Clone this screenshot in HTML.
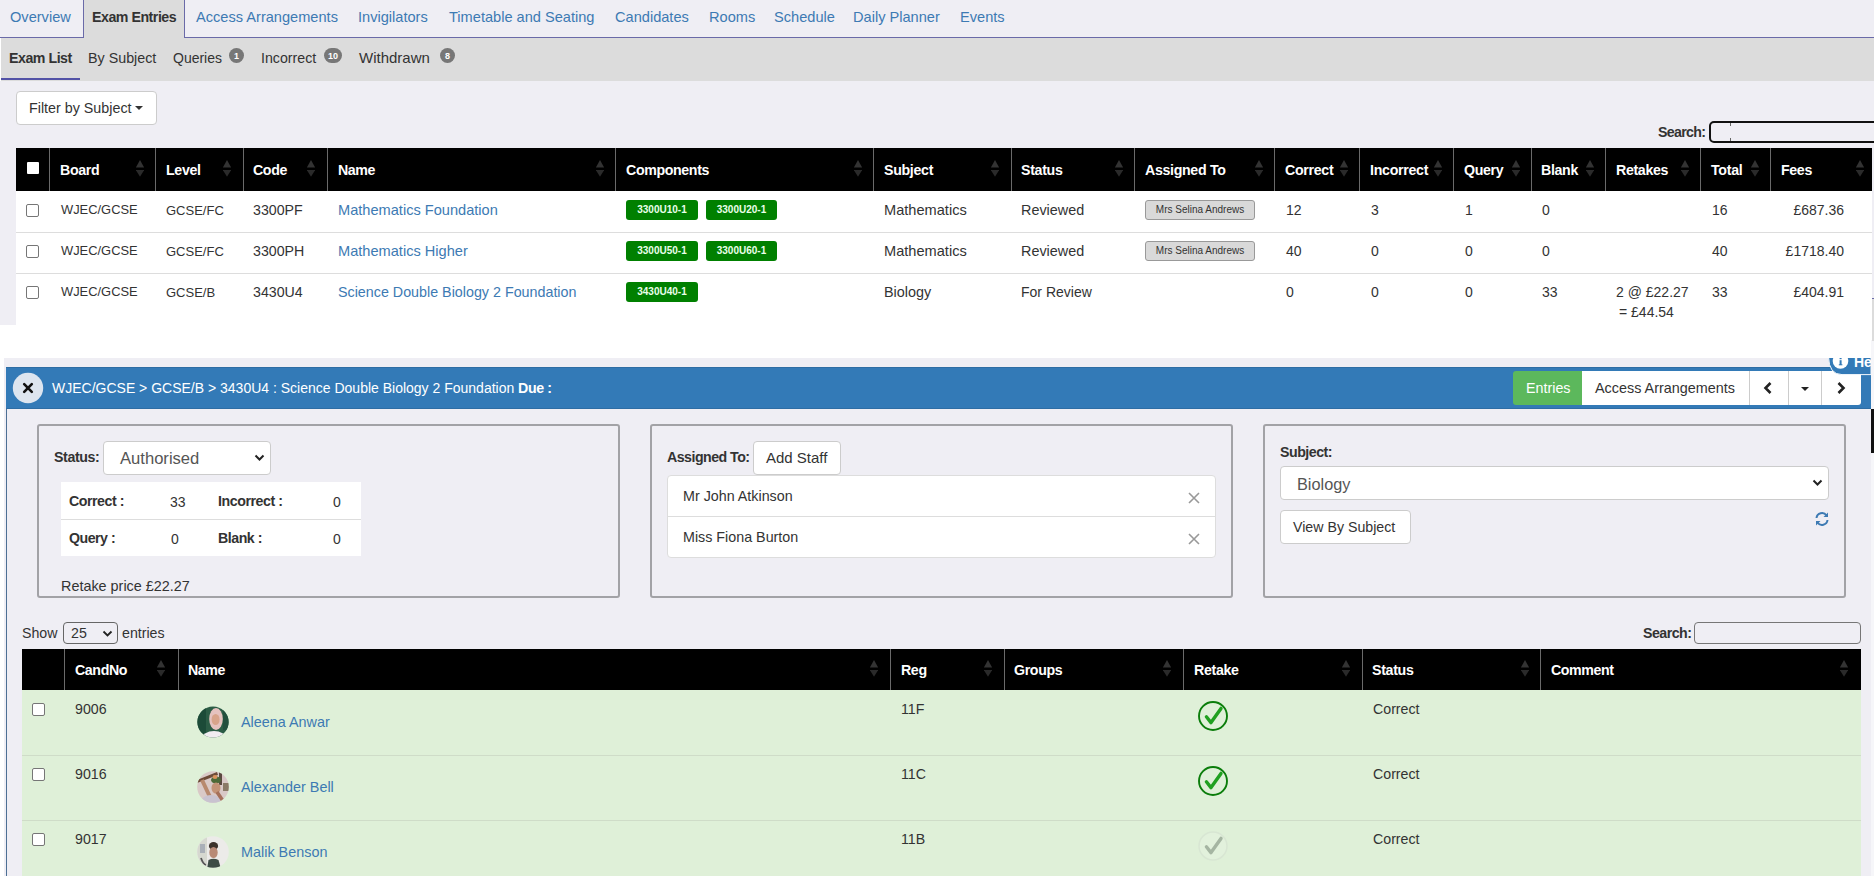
<!DOCTYPE html>
<html><head><meta charset="utf-8">
<style>
*{box-sizing:border-box;margin:0;padding:0}
html,body{width:1874px;height:876px;overflow:hidden;background:#fff}
body{font-family:"Liberation Sans",sans-serif;font-size:14px;color:#333;position:relative}
.abs{position:absolute}
.t{position:absolute;white-space:nowrap;line-height:1}
</style></head><body>

<div class="abs" style="left:0px;top:0px;width:1874px;height:38px;background:#efeef4"></div>
<div class="abs" style="left:0px;top:37px;width:1874px;height:1px;background:#6a6aa8"></div>
<div class="abs" style="left:83px;top:0px;width:102px;height:38px;background:#dcdcdc;border-left:1px solid #6a6aa8;border-right:1px solid #6a6aa8"></div>
<div class="t" style="left:10px;top:9.64px;font-size:14.6px;color:#3d7ab3;">Overview</div>
<div class="t" style="left:196px;top:9.64px;font-size:14.6px;color:#3d7ab3;">Access Arrangements</div>
<div class="t" style="left:358px;top:9.64px;font-size:14.6px;color:#3d7ab3;">Invigilators</div>
<div class="t" style="left:449px;top:9.64px;font-size:14.6px;color:#3d7ab3;">Timetable and Seating</div>
<div class="t" style="left:615px;top:9.64px;font-size:14.6px;color:#3d7ab3;">Candidates</div>
<div class="t" style="left:709px;top:9.64px;font-size:14.6px;color:#3d7ab3;">Rooms</div>
<div class="t" style="left:774px;top:9.64px;font-size:14.6px;color:#3d7ab3;">Schedule</div>
<div class="t" style="left:853px;top:9.64px;font-size:14.6px;color:#3d7ab3;">Daily Planner</div>
<div class="t" style="left:960px;top:9.64px;font-size:14.6px;color:#3d7ab3;">Events</div>
<div class="t" style="left:92px;top:9.98px;font-size:14.2px;color:#333;font-weight:bold;letter-spacing:-0.475px;">Exam Entries</div>
<div class="abs" style="left:1px;top:38px;width:1873px;height:43px;background:#dcdcdc"></div>
<div class="abs" style="left:1px;top:78px;width:79px;height:2px;background:#5252a6"></div>
<div class="t" style="left:9px;top:50.98px;font-size:14.2px;color:#333;font-weight:bold;letter-spacing:-0.472px;">Exam List</div>
<div class="t" style="left:88px;top:50.90px;font-size:14.3px;color:#333;">By Subject</div>
<div class="t" style="left:173px;top:51.15px;font-size:14.0px;color:#333;">Queries</div>
<div class="t" style="left:261px;top:50.98px;font-size:14.2px;color:#333;">Incorrect</div>
<div class="t" style="left:359px;top:50.30px;font-size:15.0px;color:#333;">Withdrawn</div>
<div class="abs" style="left:229px;top:48px;width:15px;height:15px;border-radius:8px;background:#777;color:#fff;font-size:9px;font-weight:bold;text-align:center;line-height:16px">1</div>
<div class="abs" style="left:324px;top:48px;width:18px;height:15px;border-radius:8px;background:#777;color:#fff;font-size:9px;font-weight:bold;text-align:center;line-height:16px">10</div>
<div class="abs" style="left:440px;top:48px;width:15px;height:15px;border-radius:8px;background:#777;color:#fff;font-size:9px;font-weight:bold;text-align:center;line-height:16px">8</div>
<div class="abs" style="left:0px;top:81px;width:1874px;height:244px;background:#efeef4"></div>
<div class="abs" style="left:16px;top:91px;width:141px;height:34px;background:#fff;border:1px solid #ccc;border-radius:4px"></div>
<div class="t" style="left:29px;top:100.90px;font-size:14.3px;color:#333;">Filter by Subject</div>
<svg class="abs" style="left:135px;top:106px" width="9" height="5"><path d="M0 0H8L4 4Z" fill="#333"/></svg>
<div class="t" style="left:1658px;top:124.98px;font-size:14.2px;color:#333;font-weight:bold;letter-spacing:-0.681px;">Search:</div>
<div class="abs" style="left:1709px;top:121px;width:170px;height:22px;background:#efeef4;border:2px solid #111;border-radius:5px"></div>
<div class="abs" style="left:1730px;top:123px;width:1px;height:3px;background:#666"></div>
<div class="abs" style="left:1730px;top:138px;width:1px;height:3px;background:#666"></div>
<div class="abs" style="left:16px;top:148px;width:1856px;height:43px;background:#000"></div>
<div class="abs" style="left:49px;top:148px;width:1px;height:43px;background:#6a6a6a"></div>
<div class="abs" style="left:155px;top:148px;width:1px;height:43px;background:#6a6a6a"></div>
<div class="abs" style="left:243px;top:148px;width:1px;height:43px;background:#6a6a6a"></div>
<div class="abs" style="left:327px;top:148px;width:1px;height:43px;background:#6a6a6a"></div>
<div class="abs" style="left:615px;top:148px;width:1px;height:43px;background:#6a6a6a"></div>
<div class="abs" style="left:873px;top:148px;width:1px;height:43px;background:#6a6a6a"></div>
<div class="abs" style="left:1011px;top:148px;width:1px;height:43px;background:#6a6a6a"></div>
<div class="abs" style="left:1134px;top:148px;width:1px;height:43px;background:#6a6a6a"></div>
<div class="abs" style="left:1274px;top:148px;width:1px;height:43px;background:#6a6a6a"></div>
<div class="abs" style="left:1359px;top:148px;width:1px;height:43px;background:#6a6a6a"></div>
<div class="abs" style="left:1453px;top:148px;width:1px;height:43px;background:#6a6a6a"></div>
<div class="abs" style="left:1531px;top:148px;width:1px;height:43px;background:#6a6a6a"></div>
<div class="abs" style="left:1605px;top:148px;width:1px;height:43px;background:#6a6a6a"></div>
<div class="abs" style="left:1700px;top:148px;width:1px;height:43px;background:#6a6a6a"></div>
<div class="abs" style="left:1770px;top:148px;width:1px;height:43px;background:#6a6a6a"></div>
<div class="abs" style="left:27px;top:162px;width:12px;height:12px;background:#fff;border-radius:1px"></div>
<div class="t" style="left:60px;top:163.48px;font-size:14.2px;color:#fff;font-weight:bold;letter-spacing:-0.347px;">Board</div>
<svg class="abs" style="left:135.5px;top:160px" width="8" height="18" viewBox="0 0 8 18"><path d="M4 0 L8.2 7.6 L-0.2 7.6Z" fill="#333"/><path d="M-0.2 10 L8.2 10 L4 16.8Z" fill="#2a2a2a"/></svg>
<div class="t" style="left:166px;top:163.48px;font-size:14.2px;color:#fff;font-weight:bold;letter-spacing:-0.307px;">Level</div>
<svg class="abs" style="left:223px;top:160px" width="8" height="18" viewBox="0 0 8 18"><path d="M4 0 L8.2 7.6 L-0.2 7.6Z" fill="#333"/><path d="M-0.2 10 L8.2 10 L4 16.8Z" fill="#2a2a2a"/></svg>
<div class="t" style="left:253px;top:163.48px;font-size:14.2px;color:#fff;font-weight:bold;letter-spacing:-0.375px;">Code</div>
<svg class="abs" style="left:307px;top:160px" width="8" height="18" viewBox="0 0 8 18"><path d="M4 0 L8.2 7.6 L-0.2 7.6Z" fill="#333"/><path d="M-0.2 10 L8.2 10 L4 16.8Z" fill="#2a2a2a"/></svg>
<div class="t" style="left:338px;top:163.48px;font-size:14.2px;color:#fff;font-weight:bold;letter-spacing:-0.409px;">Name</div>
<svg class="abs" style="left:595.5px;top:160px" width="8" height="18" viewBox="0 0 8 18"><path d="M4 0 L8.2 7.6 L-0.2 7.6Z" fill="#333"/><path d="M-0.2 10 L8.2 10 L4 16.8Z" fill="#2a2a2a"/></svg>
<div class="t" style="left:626px;top:163.48px;font-size:14.2px;color:#fff;font-weight:bold;letter-spacing:-0.367px;">Components</div>
<svg class="abs" style="left:854px;top:160px" width="8" height="18" viewBox="0 0 8 18"><path d="M4 0 L8.2 7.6 L-0.2 7.6Z" fill="#333"/><path d="M-0.2 10 L8.2 10 L4 16.8Z" fill="#2a2a2a"/></svg>
<div class="t" style="left:884px;top:163.48px;font-size:14.2px;color:#fff;font-weight:bold;letter-spacing:-0.310px;">Subject</div>
<svg class="abs" style="left:991px;top:160px" width="8" height="18" viewBox="0 0 8 18"><path d="M4 0 L8.2 7.6 L-0.2 7.6Z" fill="#333"/><path d="M-0.2 10 L8.2 10 L4 16.8Z" fill="#2a2a2a"/></svg>
<div class="t" style="left:1021px;top:163.48px;font-size:14.2px;color:#fff;font-weight:bold;letter-spacing:-0.306px;">Status</div>
<svg class="abs" style="left:1114.5px;top:160px" width="8" height="18" viewBox="0 0 8 18"><path d="M4 0 L8.2 7.6 L-0.2 7.6Z" fill="#333"/><path d="M-0.2 10 L8.2 10 L4 16.8Z" fill="#2a2a2a"/></svg>
<div class="t" style="left:1145px;top:163.48px;font-size:14.2px;color:#fff;font-weight:bold;letter-spacing:-0.323px;">Assigned To</div>
<svg class="abs" style="left:1255px;top:160px" width="8" height="18" viewBox="0 0 8 18"><path d="M4 0 L8.2 7.6 L-0.2 7.6Z" fill="#333"/><path d="M-0.2 10 L8.2 10 L4 16.8Z" fill="#2a2a2a"/></svg>
<div class="t" style="left:1285px;top:163.48px;font-size:14.2px;color:#fff;font-weight:bold;letter-spacing:-0.305px;">Correct</div>
<svg class="abs" style="left:1340px;top:160px" width="8" height="18" viewBox="0 0 8 18"><path d="M4 0 L8.2 7.6 L-0.2 7.6Z" fill="#333"/><path d="M-0.2 10 L8.2 10 L4 16.8Z" fill="#2a2a2a"/></svg>
<div class="t" style="left:1370px;top:163.48px;font-size:14.2px;color:#fff;font-weight:bold;letter-spacing:-0.285px;">Incorrect</div>
<svg class="abs" style="left:1434px;top:160px" width="8" height="18" viewBox="0 0 8 18"><path d="M4 0 L8.2 7.6 L-0.2 7.6Z" fill="#333"/><path d="M-0.2 10 L8.2 10 L4 16.8Z" fill="#2a2a2a"/></svg>
<div class="t" style="left:1464px;top:163.48px;font-size:14.2px;color:#fff;font-weight:bold;letter-spacing:-0.347px;">Query</div>
<svg class="abs" style="left:1511.5px;top:160px" width="8" height="18" viewBox="0 0 8 18"><path d="M4 0 L8.2 7.6 L-0.2 7.6Z" fill="#333"/><path d="M-0.2 10 L8.2 10 L4 16.8Z" fill="#2a2a2a"/></svg>
<div class="t" style="left:1541px;top:163.48px;font-size:14.2px;color:#fff;font-weight:bold;letter-spacing:-0.327px;">Blank</div>
<svg class="abs" style="left:1585.5px;top:160px" width="8" height="18" viewBox="0 0 8 18"><path d="M4 0 L8.2 7.6 L-0.2 7.6Z" fill="#333"/><path d="M-0.2 10 L8.2 10 L4 16.8Z" fill="#2a2a2a"/></svg>
<div class="t" style="left:1616px;top:163.48px;font-size:14.2px;color:#fff;font-weight:bold;letter-spacing:-0.329px;">Retakes</div>
<svg class="abs" style="left:1680.5px;top:160px" width="8" height="18" viewBox="0 0 8 18"><path d="M4 0 L8.2 7.6 L-0.2 7.6Z" fill="#333"/><path d="M-0.2 10 L8.2 10 L4 16.8Z" fill="#2a2a2a"/></svg>
<div class="t" style="left:1711px;top:163.48px;font-size:14.2px;color:#fff;font-weight:bold;letter-spacing:-0.278px;">Total</div>
<svg class="abs" style="left:1750.5px;top:160px" width="8" height="18" viewBox="0 0 8 18"><path d="M4 0 L8.2 7.6 L-0.2 7.6Z" fill="#333"/><path d="M-0.2 10 L8.2 10 L4 16.8Z" fill="#2a2a2a"/></svg>
<div class="t" style="left:1781px;top:163.48px;font-size:14.2px;color:#fff;font-weight:bold;letter-spacing:-0.342px;">Fees</div>
<svg class="abs" style="left:1855.5px;top:160px" width="8" height="18" viewBox="0 0 8 18"><path d="M4 0 L8.2 7.6 L-0.2 7.6Z" fill="#333"/><path d="M-0.2 10 L8.2 10 L4 16.8Z" fill="#2a2a2a"/></svg>
<div class="abs" style="left:16px;top:191px;width:1856px;height:134px;background:#fff"></div>
<div class="abs" style="left:16px;top:232px;width:1856px;height:1px;background:#ddd"></div>
<div class="abs" style="left:16px;top:273px;width:1856px;height:1px;background:#ddd"></div>
<div class="abs" style="left:26px;top:204px;width:13px;height:13px;border:1px solid #767676;border-radius:2px;background:#fff"></div>
<div class="t" style="left:61px;top:204.08px;font-size:12.9px;color:#333;">WJEC/GCSE</div>
<div class="t" style="left:166px;top:204.00px;font-size:13.0px;color:#333;">GCSE/FC</div>
<div class="t" style="left:253px;top:202.98px;font-size:14.2px;color:#333;">3300PF</div>
<div class="t" style="left:338px;top:202.64px;font-size:14.6px;color:#3d7ab3;">Mathematics Foundation</div>
<div class="abs" style="left:626px;top:200px;width:72px;height:20px;background:#008000;color:#fff;border-radius:3px;font-size:10px;font-weight:bold;text-align:center;line-height:19px;color:#eaffea">3300U10-1</div>
<div class="abs" style="left:706px;top:200px;width:71px;height:20px;background:#008000;color:#fff;border-radius:3px;font-size:10px;font-weight:bold;text-align:center;line-height:19px;color:#eaffea">3300U20-1</div>
<div class="t" style="left:884px;top:202.64px;font-size:14.6px;color:#333;">Mathematics</div>
<div class="t" style="left:1021px;top:202.81px;font-size:14.4px;color:#333;">Reviewed</div>
<div class="abs" style="left:1145px;top:200px;width:110px;height:20px;background:#d9d9d9;border:1px solid #999;border-radius:3px;color:#333;font-size:10px;text-align:center;line-height:18px">Mrs Selina Andrews</div>
<div class="t" style="left:1286px;top:203.15px;font-size:14px;color:#333;">12</div>
<div class="t" style="left:1371px;top:203.15px;font-size:14px;color:#333;">3</div>
<div class="t" style="left:1465px;top:203.15px;font-size:14px;color:#333;">1</div>
<div class="t" style="left:1542px;top:203.15px;font-size:14px;color:#333;">0</div>
<div class="t" style="left:1712px;top:203.15px;font-size:14px;color:#333;">16</div>
<div class="t" style="right:30px;top:203.15px;font-size:14px;color:#333;">£687.36</div>
<div class="abs" style="left:26px;top:245px;width:13px;height:13px;border:1px solid #767676;border-radius:2px;background:#fff"></div>
<div class="t" style="left:61px;top:245.08px;font-size:12.9px;color:#333;">WJEC/GCSE</div>
<div class="t" style="left:166px;top:245.00px;font-size:13.0px;color:#333;">GCSE/FC</div>
<div class="t" style="left:253px;top:243.98px;font-size:14.2px;color:#333;">3300PH</div>
<div class="t" style="left:338px;top:243.64px;font-size:14.6px;color:#3d7ab3;">Mathematics Higher</div>
<div class="abs" style="left:626px;top:241px;width:72px;height:20px;background:#008000;color:#fff;border-radius:3px;font-size:10px;font-weight:bold;text-align:center;line-height:19px;color:#eaffea">3300U50-1</div>
<div class="abs" style="left:706px;top:241px;width:71px;height:20px;background:#008000;color:#fff;border-radius:3px;font-size:10px;font-weight:bold;text-align:center;line-height:19px;color:#eaffea">3300U60-1</div>
<div class="t" style="left:884px;top:243.64px;font-size:14.6px;color:#333;">Mathematics</div>
<div class="t" style="left:1021px;top:243.81px;font-size:14.4px;color:#333;">Reviewed</div>
<div class="abs" style="left:1145px;top:241px;width:110px;height:20px;background:#d9d9d9;border:1px solid #999;border-radius:3px;color:#333;font-size:10px;text-align:center;line-height:18px">Mrs Selina Andrews</div>
<div class="t" style="left:1286px;top:244.15px;font-size:14px;color:#333;">40</div>
<div class="t" style="left:1371px;top:244.15px;font-size:14px;color:#333;">0</div>
<div class="t" style="left:1465px;top:244.15px;font-size:14px;color:#333;">0</div>
<div class="t" style="left:1542px;top:244.15px;font-size:14px;color:#333;">0</div>
<div class="t" style="left:1712px;top:244.15px;font-size:14px;color:#333;">40</div>
<div class="t" style="right:30px;top:244.15px;font-size:14px;color:#333;">£1718.40</div>
<div class="abs" style="left:26px;top:286px;width:13px;height:13px;border:1px solid #767676;border-radius:2px;background:#fff"></div>
<div class="t" style="left:61px;top:286.08px;font-size:12.9px;color:#333;">WJEC/GCSE</div>
<div class="t" style="left:166px;top:286.00px;font-size:13.0px;color:#333;">GCSE/B</div>
<div class="t" style="left:253px;top:284.98px;font-size:14.2px;color:#333;">3430U4</div>
<div class="t" style="left:338px;top:284.90px;font-size:14.3px;color:#3d7ab3;">Science Double Biology 2 Foundation</div>
<div class="abs" style="left:626px;top:282px;width:72px;height:20px;background:#008000;color:#fff;border-radius:3px;font-size:10px;font-weight:bold;text-align:center;line-height:19px;color:#eaffea">3430U40-1</div>
<div class="t" style="left:884px;top:284.81px;font-size:14.4px;color:#333;">Biology</div>
<div class="t" style="left:1021px;top:285.15px;font-size:14.0px;color:#333;">For Review</div>
<div class="t" style="left:1286px;top:285.15px;font-size:14px;color:#333;">0</div>
<div class="t" style="left:1371px;top:285.15px;font-size:14px;color:#333;">0</div>
<div class="t" style="left:1465px;top:285.15px;font-size:14px;color:#333;">0</div>
<div class="t" style="left:1542px;top:285.15px;font-size:14px;color:#333;">33</div>
<div class="t" style="left:1616px;top:285.15px;font-size:14px;color:#333;">2 @ £22.27</div>
<div class="t" style="left:1619px;top:305.15px;font-size:14px;color:#333;">= £44.54</div>
<div class="t" style="left:1712px;top:285.15px;font-size:14px;color:#333;">33</div>
<div class="t" style="right:30px;top:285.15px;font-size:14px;color:#333;">£404.91</div>
<div class="abs" style="left:4px;top:358px;width:1870px;height:518px;background:#efeef4"></div>
<div class="abs" style="left:1871px;top:340px;width:3px;height:536px;background:#f6f6f9"></div>
<div class="abs" style="left:1872px;top:258px;width:2px;height:40px;background:#efeef4"></div>
<div class="abs" style="left:1872px;top:298px;width:2px;height:1px;background:#6a6aa8"></div>
<div class="abs" style="left:1872px;top:299px;width:2px;height:42px;background:#dcdcdc"></div>
<div class="abs" style="left:6px;top:367px;width:1865px;height:42px;background:#337ab7;border-top:1px solid #2e6da4;border-bottom:1px solid #2e6da4"></div>
<div class="abs" style="left:6px;top:409px;width:1px;height:467px;background:#4d6f94"></div>
<svg class="abs" style="left:12px;top:372px" width="32" height="32" viewBox="0 0 32 32"><circle cx="16" cy="16" r="15.2" fill="#dde5ef"/><path d="M12.2 12.2 L19.8 19.8 M19.8 12.2 L12.2 19.8" stroke="#111" stroke-width="2.6" stroke-linecap="round"/></svg>
<div class="t" style="left:52px;top:381.15px;font-size:14.0px;color:#fff;">WJEC/GCSE &gt; GCSE/B &gt; 3430U4 : Science Double Biology 2 Foundation</div>
<div class="t" style="left:518px;top:380.98px;font-size:14.2px;color:#fff;font-weight:bold;letter-spacing:-0.350px;">Due :</div>
<div class="abs" style="left:1513px;top:371px;width:69px;height:34px;background:#5cb85c;border-radius:3px 0 0 3px"></div>
<div class="t" style="left:1526px;top:380.90px;font-size:14.3px;color:#fff;">Entries</div>
<div class="abs" style="left:1582px;top:371px;width:279px;height:34px;background:#fff;border-radius:0 0 3px 0"></div>
<div class="t" style="left:1595px;top:380.81px;font-size:14.4px;color:#333;">Access Arrangements</div>
<div class="abs" style="left:1749px;top:371px;width:1px;height:34px;background:#ccc"></div>
<div class="abs" style="left:1788px;top:371px;width:1px;height:34px;background:#ccc"></div>
<div class="abs" style="left:1821px;top:371px;width:1px;height:34px;background:#ccc"></div>
<svg class="abs" style="left:1762px;top:381px" width="12" height="14" viewBox="0 0 12 14"><path d="M8.5 2 L3.5 7 L8.5 12" fill="none" stroke="#222" stroke-width="2.6"/></svg>
<svg class="abs" style="left:1801px;top:387px" width="9" height="5"><path d="M0 0H8L4 4Z" fill="#222"/></svg>
<svg class="abs" style="left:1835px;top:381px" width="12" height="14" viewBox="0 0 12 14"><path d="M3.5 2 L8.5 7 L3.5 12" fill="none" stroke="#222" stroke-width="2.6"/></svg>
<div class="abs" style="left:1871px;top:409px;width:3px;height:44px;background:#111"></div>
<div class="abs" style="left:1824px;top:358px;width:47px;height:18px;overflow:hidden"><svg class="abs" style="left:0;top:0" width="47" height="18" viewBox="0 0 47 18"><path d="M4.5 -1 Q5 16.6 18 16.6 H47 V-1 Z" fill="#337ab7" stroke="#f4f8fc" stroke-width="1"/><circle cx="16.5" cy="3" r="7.8" fill="#fff"/><rect x="15.6" y="2.2" width="2" height="4.8" fill="#337ab7"/><rect x="14.8" y="6.3" width="3.6" height="1" fill="#337ab7"/><rect x="15.6" y="0" width="2" height="1.2" fill="#337ab7"/></svg><div class="t" style="left:30px;top:-3.5px;font-size:14px;font-weight:bold;color:#fff">He</div></div>
<div class="abs" style="left:37px;top:424px;width:583px;height:174px;border:2px solid #a2a2a6;border-radius:3px"></div>
<div class="abs" style="left:650px;top:424px;width:583px;height:174px;border:2px solid #a2a2a6;border-radius:3px"></div>
<div class="abs" style="left:1263px;top:424px;width:583px;height:174px;border:2px solid #a2a2a6;border-radius:3px"></div>
<div class="t" style="left:54px;top:449.98px;font-size:14.2px;color:#333;font-weight:bold;letter-spacing:-0.387px;">Status:</div>
<div class="abs" style="left:103px;top:441px;width:168px;height:34px;background:#fff;border:1px solid #ccc;border-radius:4px"></div>
<div class="t" style="left:120px;top:450.95px;font-size:16.6px;color:#555;">Authorised</div>
<svg class="abs" style="left:254px;top:454px" width="11" height="8" viewBox="0 0 11 8"><path d="M1.5 1.5 L5.5 5.5 L9.5 1.5" fill="none" stroke="#222" stroke-width="2"/></svg>
<div class="abs" style="left:61px;top:482px;width:300px;height:74px;background:#fff"></div>
<div class="abs" style="left:61px;top:519px;width:300px;height:1px;background:#ddd"></div>
<div class="t" style="left:69px;top:493.98px;font-size:14.2px;color:#333;font-weight:bold;letter-spacing:-0.463px;">Correct :</div>
<div class="t" style="left:170px;top:495.15px;font-size:14px;color:#333;">33</div>
<div class="t" style="left:218px;top:493.98px;font-size:14.2px;color:#333;font-weight:bold;letter-spacing:-0.445px;">Incorrect :</div>
<div class="t" style="left:333px;top:495.15px;font-size:14px;color:#333;">0</div>
<div class="t" style="left:69px;top:530.98px;font-size:14.2px;color:#333;font-weight:bold;letter-spacing:-0.500px;">Query :</div>
<div class="t" style="left:171px;top:532.15px;font-size:14px;color:#333;">0</div>
<div class="t" style="left:218px;top:530.98px;font-size:14.2px;color:#333;font-weight:bold;letter-spacing:-0.476px;">Blank :</div>
<div class="t" style="left:333px;top:532.15px;font-size:14px;color:#333;">0</div>
<div class="t" style="left:61px;top:578.81px;font-size:14.4px;color:#333;">Retake price £22.27</div>
<div class="t" style="left:667px;top:449.98px;font-size:14.2px;color:#333;font-weight:bold;letter-spacing:-0.522px;">Assigned To:</div>
<div class="abs" style="left:753px;top:441px;width:88px;height:34px;background:#fff;border:1px solid #ccc;border-radius:4px"></div>
<div class="t" style="left:766px;top:450.30px;font-size:15.0px;color:#333;">Add Staff</div>
<div class="abs" style="left:667px;top:475px;width:549px;height:83px;background:#fff;border:1px solid #ddd;border-radius:4px"></div>
<div class="abs" style="left:668px;top:516px;width:547px;height:1px;background:#ddd"></div>
<div class="t" style="left:683px;top:488.90px;font-size:14.3px;color:#333;">Mr John Atkinson</div>
<div class="t" style="left:683px;top:529.90px;font-size:14.3px;color:#333;">Miss Fiona Burton</div>
<svg class="abs" style="left:1188px;top:492px" width="12" height="12" viewBox="0 0 12 12"><path d="M1 1 L11 11 M11 1 L1 11" stroke="#999" stroke-width="1.6"/></svg>
<svg class="abs" style="left:1188px;top:533px" width="12" height="12" viewBox="0 0 12 12"><path d="M1 1 L11 11 M11 1 L1 11" stroke="#999" stroke-width="1.6"/></svg>
<div class="t" style="left:1280px;top:444.98px;font-size:14.2px;color:#333;font-weight:bold;letter-spacing:-0.493px;">Subject:</div>
<div class="abs" style="left:1280px;top:466px;width:549px;height:34px;background:#fff;border:1px solid #ccc;border-radius:4px"></div>
<div class="t" style="left:1297px;top:476.20px;font-size:16.3px;color:#555;">Biology</div>
<svg class="abs" style="left:1812px;top:479px" width="11" height="8" viewBox="0 0 11 8"><path d="M1.5 1.5 L5.5 5.5 L9.5 1.5" fill="none" stroke="#222" stroke-width="2"/></svg>
<div class="abs" style="left:1280px;top:510px;width:131px;height:34px;background:#fff;border:1px solid #ccc;border-radius:4px"></div>
<div class="t" style="left:1293px;top:519.98px;font-size:14.2px;color:#333;">View By Subject</div>
<svg class="abs" style="left:1814px;top:511px" width="16" height="16" viewBox="0 0 16 16"><path d="M2.5 7 A5.5 5.5 0 0 1 12.5 4.5" fill="none" stroke="#3d7ab3" stroke-width="2"/><path d="M14 1.5 V6 H9.5Z" fill="#3d7ab3"/><path d="M13.5 9 A5.5 5.5 0 0 1 3.5 11.5" fill="none" stroke="#3d7ab3" stroke-width="2"/><path d="M2 14.5 V10 H6.5Z" fill="#3d7ab3"/></svg>
<div class="t" style="left:22px;top:625.98px;font-size:14.2px;color:#333;font-weight:bold;font-weight:normal;">Show</div>
<div class="abs" style="left:63px;top:622px;width:55px;height:22px;background:#efeef4;border:1px solid #666;border-radius:4px"></div>
<div class="t" style="left:71px;top:625.98px;font-size:14.2px;color:#333;">25</div>
<svg class="abs" style="left:102px;top:630px" width="11" height="7" viewBox="0 0 11 7"><path d="M1.5 1.5 L5.5 5.5 L9.5 1.5" fill="none" stroke="#222" stroke-width="1.8"/></svg>
<div class="t" style="left:122px;top:625.98px;font-size:14.2px;color:#333;">entries</div>
<div class="t" style="left:1643px;top:625.98px;font-size:14.2px;color:#333;font-weight:bold;letter-spacing:-0.524px;">Search:</div>
<div class="abs" style="left:1694px;top:622px;width:167px;height:22px;background:#efeef4;border:1px solid #767676;border-radius:4px"></div>
<div class="abs" style="left:22px;top:649px;width:1839px;height:41px;background:#000"></div>
<div class="abs" style="left:64px;top:649px;width:1px;height:41px;background:#6a6a6a"></div>
<div class="abs" style="left:178px;top:649px;width:1px;height:41px;background:#6a6a6a"></div>
<div class="abs" style="left:890px;top:649px;width:1px;height:41px;background:#6a6a6a"></div>
<div class="abs" style="left:1004px;top:649px;width:1px;height:41px;background:#6a6a6a"></div>
<div class="abs" style="left:1183px;top:649px;width:1px;height:41px;background:#6a6a6a"></div>
<div class="abs" style="left:1362px;top:649px;width:1px;height:41px;background:#6a6a6a"></div>
<div class="abs" style="left:1540px;top:649px;width:1px;height:41px;background:#6a6a6a"></div>
<div class="t" style="left:75px;top:662.98px;font-size:14.2px;color:#fff;font-weight:bold;letter-spacing:-0.383px;">CandNo</div>
<svg class="abs" style="left:157px;top:660px" width="8" height="18" viewBox="0 0 8 18"><path d="M4 0 L8.2 7.6 L-0.2 7.6Z" fill="#333"/><path d="M-0.2 10 L8.2 10 L4 16.8Z" fill="#2a2a2a"/></svg>
<div class="t" style="left:188px;top:662.98px;font-size:14.2px;color:#fff;font-weight:bold;letter-spacing:-0.409px;">Name</div>
<svg class="abs" style="left:870px;top:660px" width="8" height="18" viewBox="0 0 8 18"><path d="M4 0 L8.2 7.6 L-0.2 7.6Z" fill="#333"/><path d="M-0.2 10 L8.2 10 L4 16.8Z" fill="#2a2a2a"/></svg>
<div class="t" style="left:901px;top:662.98px;font-size:14.2px;color:#fff;font-weight:bold;letter-spacing:-0.378px;">Reg</div>
<svg class="abs" style="left:984px;top:660px" width="8" height="18" viewBox="0 0 8 18"><path d="M4 0 L8.2 7.6 L-0.2 7.6Z" fill="#333"/><path d="M-0.2 10 L8.2 10 L4 16.8Z" fill="#2a2a2a"/></svg>
<div class="t" style="left:1014px;top:662.98px;font-size:14.2px;color:#fff;font-weight:bold;letter-spacing:-0.356px;">Groups</div>
<svg class="abs" style="left:1163px;top:660px" width="8" height="18" viewBox="0 0 8 18"><path d="M4 0 L8.2 7.6 L-0.2 7.6Z" fill="#333"/><path d="M-0.2 10 L8.2 10 L4 16.8Z" fill="#2a2a2a"/></svg>
<div class="t" style="left:1194px;top:662.98px;font-size:14.2px;color:#fff;font-weight:bold;letter-spacing:-0.328px;">Retake</div>
<svg class="abs" style="left:1342px;top:660px" width="8" height="18" viewBox="0 0 8 18"><path d="M4 0 L8.2 7.6 L-0.2 7.6Z" fill="#333"/><path d="M-0.2 10 L8.2 10 L4 16.8Z" fill="#2a2a2a"/></svg>
<div class="t" style="left:1372px;top:662.98px;font-size:14.2px;color:#fff;font-weight:bold;letter-spacing:-0.306px;">Status</div>
<svg class="abs" style="left:1521px;top:660px" width="8" height="18" viewBox="0 0 8 18"><path d="M4 0 L8.2 7.6 L-0.2 7.6Z" fill="#333"/><path d="M-0.2 10 L8.2 10 L4 16.8Z" fill="#2a2a2a"/></svg>
<div class="t" style="left:1551px;top:662.98px;font-size:14.2px;color:#fff;font-weight:bold;letter-spacing:-0.395px;">Comment</div>
<svg class="abs" style="left:1840px;top:660px" width="8" height="18" viewBox="0 0 8 18"><path d="M4 0 L8.2 7.6 L-0.2 7.6Z" fill="#333"/><path d="M-0.2 10 L8.2 10 L4 16.8Z" fill="#2a2a2a"/></svg>
<div class="abs" style="left:22px;top:690px;width:1839px;height:186px;background:#dff0d8"></div>
<div class="abs" style="left:22px;top:755px;width:1839px;height:1px;background:#cfdcc8"></div>
<div class="abs" style="left:22px;top:820px;width:1839px;height:1px;background:#cfdcc8"></div>
<div class="abs" style="left:32px;top:703px;width:13px;height:13px;border:1px solid #767676;border-radius:2px;background:#fff"></div>
<div class="t" style="left:75px;top:701.98px;font-size:14.2px;color:#333;">9006</div>
<div class="t" style="left:241px;top:714.81px;font-size:14.4px;color:#3d7ab3;">Aleena Anwar</div>
<div class="t" style="left:901px;top:701.98px;font-size:14.2px;color:#333;">11F</div>
<div class="t" style="left:1373px;top:701.98px;font-size:14.2px;color:#333;">Correct</div>
<svg class="abs" style="left:1197px;top:700px" width="32" height="32" viewBox="0 0 32 32"><circle cx="16" cy="16" r="14" fill="none" stroke="#0b7d0b" stroke-width="1.9"/><path d="M9.4 16.8 L14 22.6 L24 8.4" fill="none" stroke="#20a020" stroke-width="3.4" stroke-linecap="round" stroke-linejoin="round"/></svg>
<div class="abs" style="left:32px;top:768px;width:13px;height:13px;border:1px solid #767676;border-radius:2px;background:#fff"></div>
<div class="t" style="left:75px;top:766.98px;font-size:14.2px;color:#333;">9016</div>
<div class="t" style="left:241px;top:779.81px;font-size:14.4px;color:#3d7ab3;">Alexander Bell</div>
<div class="t" style="left:901px;top:766.98px;font-size:14.2px;color:#333;">11C</div>
<div class="t" style="left:1373px;top:766.98px;font-size:14.2px;color:#333;">Correct</div>
<svg class="abs" style="left:1197px;top:765px" width="32" height="32" viewBox="0 0 32 32"><circle cx="16" cy="16" r="14" fill="none" stroke="#0b7d0b" stroke-width="1.9"/><path d="M9.4 16.8 L14 22.6 L24 8.4" fill="none" stroke="#20a020" stroke-width="3.4" stroke-linecap="round" stroke-linejoin="round"/></svg>
<div class="abs" style="left:32px;top:833px;width:13px;height:13px;border:1px solid #767676;border-radius:2px;background:#fff"></div>
<div class="t" style="left:75px;top:831.98px;font-size:14.2px;color:#333;">9017</div>
<div class="t" style="left:241px;top:844.81px;font-size:14.4px;color:#3d7ab3;">Malik Benson</div>
<div class="t" style="left:901px;top:831.98px;font-size:14.2px;color:#333;">11B</div>
<div class="t" style="left:1373px;top:831.98px;font-size:14.2px;color:#333;">Correct</div>
<svg class="abs" style="left:1197px;top:830px" width="32" height="32" viewBox="0 0 32 32"><circle cx="16" cy="16" r="14" fill="#e2f1dc" stroke="#d8e6d3" stroke-width="1.5"/><path d="M9.4 16.8 L14 22.6 L24 8.4" fill="none" stroke="#a5b5a2" stroke-width="3.4" stroke-linecap="round" stroke-linejoin="round"/></svg>
<svg class="abs" style="left:197px;top:706px" width="32" height="32" viewBox="0 0 32 32"><defs><clipPath id="c1"><circle cx="16" cy="16" r="15.6"/></clipPath><filter id="bl" x="-20%" y="-20%" width="140%" height="140%"><feGaussianBlur stdDeviation="0.7"/></filter></defs>
<g clip-path="url(#c1)"><rect width="32" height="32" fill="#2b5c45"/><g filter="url(#bl)"><rect x="0" y="0" width="9" height="32" fill="#1f4b37"/><rect x="26" y="4" width="6" height="20" fill="#244f3c"/>
<ellipse cx="19" cy="13" rx="6.8" ry="11" fill="#e5c2bf"/><ellipse cx="18.6" cy="13.5" rx="4" ry="5.6" fill="#d8a48b"/><ellipse cx="17" cy="33" rx="12" ry="8" fill="#f1ecf1"/></g></g></svg>
<svg class="abs" style="left:197px;top:771px" width="32" height="32" viewBox="0 0 32 32"><defs><clipPath id="c2"><circle cx="16" cy="16" r="15.8"/></clipPath></defs>
<g clip-path="url(#c2)"><rect width="32" height="32" fill="#d9c9c7"/><g filter="url(#bl)"><path d="M0 9 L20 1 L21 4 L0 12Z" fill="#6d4c38"/><rect x="22" y="0" width="3" height="14" fill="#5a4a40"/>
<rect x="26" y="12" width="6" height="8" fill="#8a7a66"/><ellipse cx="19" cy="9" rx="5" ry="3.5" fill="#4e6a38"/><ellipse cx="18" cy="6" rx="2.5" ry="2" fill="#d9935c"/>
<ellipse cx="19" cy="17" rx="4.5" ry="5.5" fill="#c39377"/><path d="M5 9 L13 26" stroke="#b8896e" stroke-width="4"/><ellipse cx="14" cy="31" rx="10" ry="7" fill="#c9c3d0"/><path d="M20 21 L26 30" stroke="#a5705a" stroke-width="3.5"/></g></g></svg>
<svg class="abs" style="left:197px;top:836px" width="32" height="32" viewBox="0 0 32 32"><defs><clipPath id="c3"><circle cx="16" cy="16" r="15.8"/></clipPath></defs>
<g clip-path="url(#c3)"><rect width="32" height="32" fill="#ecebe9"/><g filter="url(#bl)"><rect x="0" y="0" width="10" height="32" fill="#d6d8d0"/><rect x="3" y="8" width="5" height="9" fill="#aab0b8"/><path d="M4 22 Q6 28 9 29" stroke="#555" stroke-width="1.8" fill="none"/>
<ellipse cx="16.5" cy="10" rx="4.6" ry="4" fill="#3b302a"/><ellipse cx="16.5" cy="16.5" rx="4.2" ry="5.5" fill="#b88a76"/><path d="M10 33 L11.5 24 Q16.5 21.5 21.5 24 L24 33Z" fill="#3e4c44"/></g></g></svg>
</body></html>
